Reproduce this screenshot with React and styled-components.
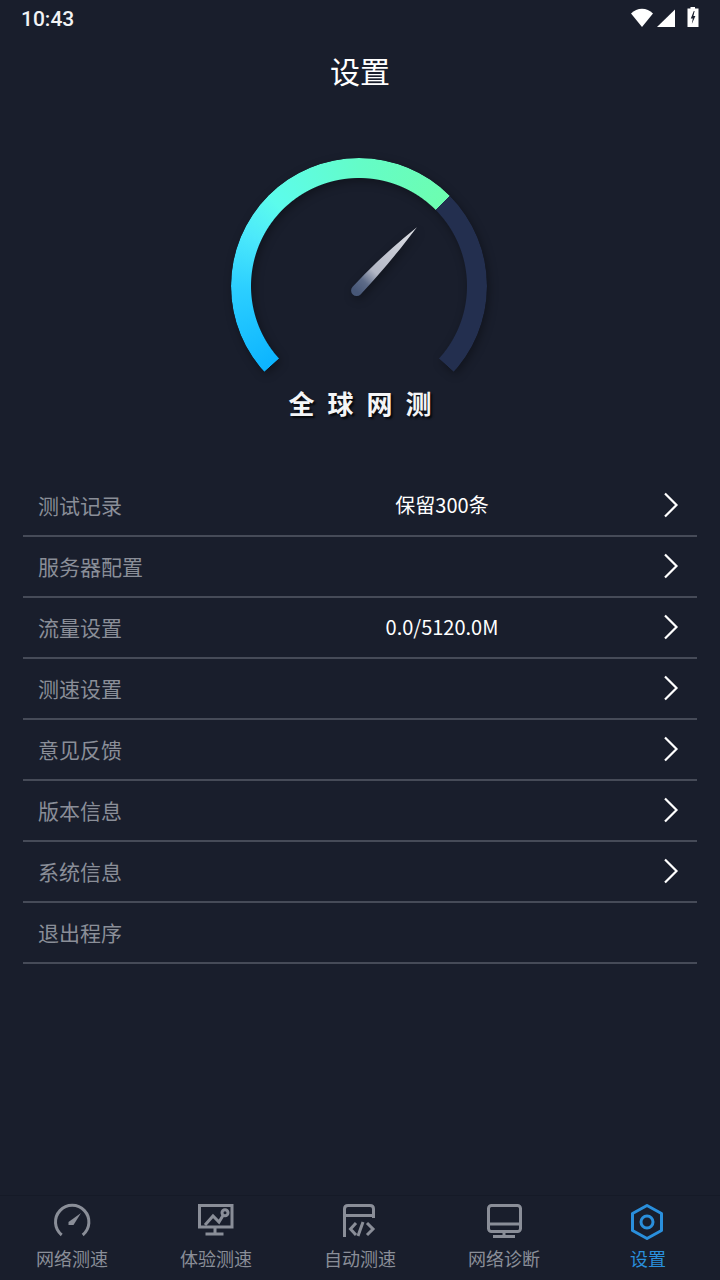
import React from 'react';
import styled, { createGlobalStyle } from 'styled-components';

const CJK = '"Noto Sans CJK SC", "Noto Sans", sans-serif';
const BG = '#191e2c';
const GRAY = '#8a8e98';
const BLUE = '#2a8fdc';

const GlobalStyle = createGlobalStyle`
  html, body {
    margin: 0;
    padding: 0;
    background: ${BG};
  }
  * {
    box-sizing: border-box;
  }
`;

const Page = styled.div`
  width: 720px;
  height: 1280px;
  display: flex;
  flex-direction: column;
  align-items: center;
  background: ${BG};
  font-family: ${CJK};
  overflow: hidden;
`;

const StatusBar = styled.div`
  width: 100%;
  height: 36px;
  flex: none;
  display: flex;
  align-items: center;
  justify-content: space-between;
  padding: 1px 20px 0 21px;
`;

const Clock = styled.span`
  font-family: Roboto, sans-serif;
  font-size: 21px;
  font-weight: 500;
  color: #f2f3f5;
`;

const Header = styled.header`
  width: 100%;
  height: 72px;
  flex: none;
  display: flex;
  align-items: center;
  justify-content: center;
  padding-bottom: 4px;
`;

const Title = styled.h1`
  margin: 0;
  font-size: 30px;
  font-weight: 400;
  line-height: 40px;
  color: #fff;
`;

const Ring = styled.div`
  position: relative;
  width: 256px;
  height: 256px;
  margin: 50px 2px -25px 0;
  flex: none;
  filter: drop-shadow(2px 3px 5px rgba(0, 0, 0, 0.35));
`;

const RingBand = styled.div`
  width: 100%;
  height: 100%;
  border-radius: 50%;
  background: conic-gradient(
    #64fcc8 0deg,
    #6dfdb0 45deg,
    #232f4f 45.3deg,
    #232f4f 132deg,
    transparent 132.3deg,
    transparent 227.7deg,
    #0cb4ff 228deg,
    #2dd0ff 270deg,
    #4ce9fb 295deg,
    #5cfcec 315deg,
    #64fcc8 360deg
  );
  mask: radial-gradient(circle, transparent 107.5px, #000 108.5px);
`;

const Needle = styled.svg`
  position: absolute;
  left: 0;
  top: 0;
  width: 256px;
  height: 256px;
`;

const Brand = styled.div`
  height: 28px;
  display: flex;
  gap: 13px;
  font-size: 26px;
  font-weight: 700;
  line-height: 28px;
  color: #f4f5f7;
  text-shadow: 2px 2px 2px rgba(0, 0, 0, 0.75);
`;

const Menu = styled.ul`
  list-style: none;
  width: 674px;
  margin: 59px 0 0;
  padding: 0;
`;

const Row = styled.li`
  height: 61px;
  display: grid;
  grid-template-columns: 243px 322px 1fr;
  align-items: center;
  padding-left: 15px;
  border-bottom: 2px solid #464b58;
`;

const RowLabel = styled.span`
  font-size: 21px;
  line-height: 28px;
  padding-bottom: 1px;
  color: ${GRAY};
`;

const RowValue = styled.span`
  font-size: 20px;
  line-height: 28px;
  padding-bottom: 2px;
  text-align: center;
  color: #fff;
`;

const Chevron = styled.svg`
  width: 16px;
  height: 26px;
  margin: 0 0 2px 60px;
`;

const TabBar = styled.nav`
  width: 100%;
  height: 85px;
  margin-top: auto;
  flex: none;
  display: grid;
  grid-template-columns: repeat(5, 144px);
  padding-top: 6px;
  border-top: 1px solid #151a27;
`;

const Tab = styled.div`
  display: flex;
  flex-direction: column;
  align-items: center;
  gap: 3px;
  font-size: 18px;
  line-height: 26px;
  color: ${props => (props.$active ? BLUE : GRAY)};
`;

const TabIcon = styled.svg`
  width: 40px;
  height: 40px;
  fill: none;
  stroke: currentColor;
  stroke-width: 3;
`;

const StatusIcons = () => (
  <svg width="70" height="24" viewBox="0 0 70 24" fill="#fff">
    <path d="M1 6.5 C7 0 17 0 23 6.5 L12 20 Z" />
    <path d="M27 20 L45 2.5 V20 Z" />
    <path d="M60.5 1.5 V0 H65 V1.5 H68.5 V20 H57.5 V1.5 Z" />
    <path d="M63.8 4 L60.8 11.5 H62.8 L61.8 17 L65.4 9 H63.4 L64.6 4 Z" fill={BG} />
  </svg>
);

const RowArrow = () => (
  <Chevron viewBox="0 0 16 26" fill="none" stroke="#fff" strokeWidth="2.2">
    <path d="M2 1.5 L13.5 13 L2 24.5" />
  </Chevron>
);

const rows = [
  { label: '测试记录', value: '保留300条', arrow: true },
  { label: '服务器配置', arrow: true },
  { label: '流量设置', value: '0.0/5120.0M', arrow: true },
  { label: '测速设置', arrow: true },
  { label: '意见反馈', arrow: true },
  { label: '版本信息', arrow: true },
  { label: '系统信息', arrow: true },
  { label: '退出程序' },
];

const App = () => {
  return (
    <Page>
      <GlobalStyle />
      <StatusBar>
        <Clock>10:43</Clock>
        <StatusIcons />
      </StatusBar>
      <Header>
        <Title>设置</Title>
      </Header>

      <Ring>
        <RingBand />
        <Needle viewBox="0 0 256 256">
          <defs>
            <linearGradient id="needle" gradientUnits="userSpaceOnUse" x1="125" y1="133" x2="186" y2="69">
              <stop offset="0" stopColor="#475777" />
              <stop offset="0.14" stopColor="#5d6b88" />
              <stop offset="0.3" stopColor="#b2b6c4" />
              <stop offset="1" stopColor="#dfe1e6" />
            </linearGradient>
          </defs>
          <path d="M185.9 69.2 Q150 98 121.6 128.8 A5.2 5.2 0 0 0 129.6 136.4 Q160 104 185.9 69.2 Z" fill="url(#needle)" />
        </Needle>
      </Ring>
      <Brand>
        <span>全</span>
        <span>球</span>
        <span>网</span>
        <span>测</span>
      </Brand>

      <Menu>
        {rows.map(row => (
          <Row key={row.label}>
            <RowLabel>{row.label}</RowLabel>
            <RowValue>{row.value}</RowValue>
            {row.arrow && <RowArrow />}
          </Row>
        ))}
      </Menu>

      <TabBar>
        <Tab>
          <TabIcon viewBox="0 0 40 40">
            <path d="M9.7 33 A16.7 16.7 0 1 1 30.7 33" />
            <path d="M29 11 L21.5 23 L16.5 23 L16.5 20 Z" fill="currentColor" stroke="none" />
          </TabIcon>
          网络测速
        </Tab>
        <Tab>
          <TabIcon viewBox="0 0 40 40">
            <path d="M25 3.5 H36 V25 H3.5 V3.5 H25" />
            <path d="M9 23 L17 14 L23 20 L27 13.5" />
            <circle cx="29" cy="10.7" r="3" />
            <path d="M19 25 V32 M9.5 32 H27.5" />
          </TabIcon>
          体验测速
        </Tab>
        <Tab>
          <TabIcon viewBox="0 0 40 40">
            <path d="M4.5 35 V7 Q4.5 3.5 8 3.5 H30 Q33.5 3.5 33.5 7 V16 M4.5 13.5 H33.5" />
            <path d="M16 21 L10.5 27 L16 33 M23 20 L18 34 M27 21 L33 27 L27 33" />
          </TabIcon>
          自动测速
        </Tab>
        <Tab>
          <TabIcon viewBox="0 0 40 40">
            <rect x="4.5" y="3.5" width="32" height="26" rx="3" />
            <path d="M4.5 22 H36.5 M20 29.5 V34.5 M9 34.5 H31" />
          </TabIcon>
          网络诊断
        </Tab>
        <Tab $active>
          <TabIcon viewBox="1 0 40 40">
            <path d="M20 3.5 L34.5 11.5 V28.5 L20 36.5 L5.5 28.5 V11.5 Z" strokeLinejoin="round" />
            <circle cx="20" cy="20" r="6" />
          </TabIcon>
          设置
        </Tab>
      </TabBar>
    </Page>
  );
};

export default App;
